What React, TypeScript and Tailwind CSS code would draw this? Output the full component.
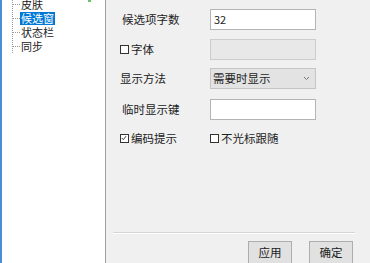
import React from "react";

const FONT = { fontFamily: '"Microsoft YaHei", "Noto Sans CJK SC", "Noto Sans", sans-serif' };

function Box({ checked = false }: { checked?: boolean }) {
  return (
    <span className="relative inline-flex w-[9px] h-[9px] border border-[#333] bg-white shrink-0 mr-[2px]">
      {checked && (
        <svg viewBox="0 0 9 9" className="absolute inset-0 w-[7px] h-[7px]" fill="none" stroke="#333" strokeWidth={1.2}>
          <path d="M1 3.8l2 2.2 3.6-4.6" />
        </svg>
      )}
    </span>
  );
}

function TreeItem({ label, active = false }: { label: string; active?: boolean }) {
  return (
    <div className="flex items-center h-[14px]">
      <span className="w-[7px] border-t border-dotted border-[#999]" />
      <span className={`block h-[13px] px-[1px] text-[11px] leading-[13px] ${active ? "bg-[#0078d7] text-white" : "text-[#222]"}`}>{label}</span>
    </div>
  );
}

function Row({ label, children, className = "" }: { label: React.ReactNode; children: React.ReactNode; className?: string }) {
  return (
    <div className={`flex items-center ${className}`}>
      <div className="w-[90px] flex items-center">{label}</div>
      {children}
    </div>
  );
}

export default function App() {
  return (
    <div className="flex w-[370px] h-[263px] overflow-hidden bg-[#f0f0f0] text-[11.5px] text-[#222]" style={FONT}>
      <aside className="relative w-[106px] shrink-0 h-full bg-white border-l-2 border-[#4a8fd6] border-r border-r-[#a0a0a0]">
        <span className="absolute left-[86px] top-0 w-[3px] h-[2px] bg-[#6cc070]" />
        <div className="ml-[10px] -mt-[3px] border-l border-dotted border-[#999] w-fit pr-2">
          <TreeItem label="皮肤" />
          <TreeItem label="候选窗" active />
          <TreeItem label="状态栏" />
          <TreeItem label="同步" />
        </div>
      </aside>

      <main className="flex-1 flex flex-col h-full">
        <div className="pl-[14px] pt-[9px]">
          <Row label={<span className="pl-[2px]">候选项字数</span>}>
            <div className="w-[106px] h-[21px] border border-[#b4b4b4] bg-white px-[3px] flex items-center text-[11px]">32</div>
          </Row>
          <Row className="mt-[9px]" label={<><Box />字体</>}>
            <div className="w-[106px] h-[21px] border border-[#cccccc] bg-[#e8e8e8]" />
          </Row>
          <Row className="mt-[8px]" label="显示方法">
            <div className="w-[106px] h-[21px] border border-[#c4c4c4] bg-[#e3e3e3] pl-[2px] pr-[5px] flex items-center justify-between">
              <span>需要时显示</span>
              <svg width="7" height="5" viewBox="0 0 7 5" fill="none" stroke="#777" strokeWidth={1}>
                <path d="M1 1l2.5 2.5L6 1" />
              </svg>
            </div>
          </Row>
          <Row className="mt-[10px]" label={<span className="pl-[2px]">临时显示键</span>}>
            <div className="w-[106px] h-[21px] border border-[#b4b4b4] bg-white" />
          </Row>
          <Row className="mt-[10px]" label={<><Box checked />编码提示</>}>
            <div className="flex items-center"><Box />不光标跟随</div>
          </Row>
        </div>

        <div className="flex-1" />
        <div className="ml-[7px] mr-[15px] h-[2px] border-t border-[#d5d5d5] border-b border-b-white" />
        <div className="flex justify-end gap-[17px] pr-[17px] mt-[7px] -mb-[2px] h-[24px]">
          <button className="w-[44px] h-[24px] border border-[#adadad] bg-[#e1e1e1]">应用</button>
          <button className="w-[44px] h-[24px] border border-[#adadad] bg-[#e1e1e1]">确定</button>
        </div>
      </main>
    </div>
  );
}
